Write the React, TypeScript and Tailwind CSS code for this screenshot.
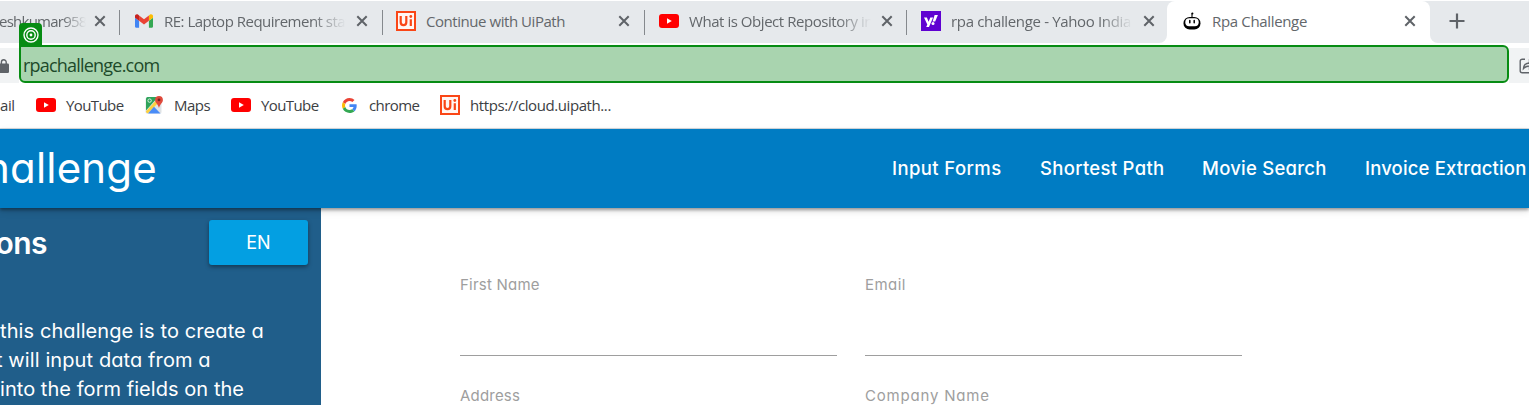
import type { ReactNode } from "react";

const ICON_GRAY = "#5f6368";

function CloseIcon() {
  return (
    <svg viewBox="0 0 12 12" className="size-3 shrink-0" fill="none" stroke={ICON_GRAY} strokeWidth="2">
      <path d="M1.300 1.300 10.700 10.700M10.700 1.300 1.300 10.700" />
    </svg>
  );
}

function GmailIcon() {
  return (
    <svg viewBox="52 42 88 66" className="h-[14px] w-[18px]">
      <path fill="#4285f4" d="M58 108h14V74L52 59v43c0 3.320 2.690 6 6 6" />
      <path fill="#34a853" d="M120 108h14c3.320 0 6-2.690 6-6V59l-20 15" />
      <path fill="#fbbc04" d="M120 48v26l20-15v-8c0-7.420-8.470-11.650-14.400-7.200" />
      <path fill="#ea4335" d="M72 74V48l24 18 24-18v26L96 92" />
      <path fill="#c5221f" d="M52 51v8l20 15V48l-5.600-4.200c-5.940-4.450-14.400-.22-14.400 7.200" />
    </svg>
  );
}

function UiPathIcon() {
  return (
    <svg viewBox="0 0 20 20" className="size-5">
      <rect x="1" y="1" width="18" height="18" fill="#fff6f3" stroke="#fa4616" strokeWidth="2" />
      <path d="M4.700 5v6.200q0 2.900 2.800 2.900t2.800-2.900V5M14.800 8.200v6.900" fill="none" stroke="#fa4616" strokeWidth="2.200" />
      <circle cx="14.800" cy="5.500" r="1.400" fill="#fa4616" />
    </svg>
  );
}

function YouTubeIcon() {
  return (
    <svg viewBox="0 0 20 14" className="h-[14px] w-5">
      <rect width="20" height="14" rx="3" fill="#ff0000" />
      <path d="M8 4.300v5.400l4.800-2.700z" fill="#fff" />
    </svg>
  );
}

function YahooIcon() {
  return (
    <svg viewBox="0 0 20 20" className="size-5">
      <rect width="20" height="20" fill="#5f01d1" />
      <path d="M3 6.500h2.900l1.700 4.200 1.700-4.200h2.800L8 16H5.200l1.100-2.600z" fill="#fff" />
      <path d="M13.600 4h3.300l-2.700 6.400h-2.600z" fill="#fff" />
      <circle cx="12" cy="12.500" r="1.500" fill="#fff" />
    </svg>
  );
}

function BotIcon() {
  return (
    <svg viewBox="0 0 18 18" className="size-[18px]">
      <path d="M9 5V1.200" stroke="#000" strokeWidth="1.100" />
      <circle cx="9.400" cy="1.500" r="1" />
      <rect x=".5" y="5" width="17" height="12.600" rx="6.200" />
      <rect x="2.300" y="6.200" width="13.400" height="8" rx="3.900" fill="#fff" />
      <path d="M6.800 8.500v2.300M11.200 8.500v2.300" stroke="#000" strokeWidth="1.500" strokeLinecap="round" />
    </svg>
  );
}

function MapsIcon() {
  return (
    <svg viewBox="0 0 18 18" className="size-[18px]">
      <path d="M2.500 1H15a1.500 1.500 0 0 1 1.500 1.500V16A1.500 1.500 0 0 1 15 17.500H2A1.500 1.500 0 0 1 .5 16V3a2 2 0 0 1 2-2z" fill="#dfe3e6" />
      <path d="M2.500 1H13L1 14.500V3a2 2 0 0 1 1.500-2z" fill="#2fa35a" />
      <path d="M.8 15.500 13.500 1.800l2.300 2.400L3 17.300H2z" fill="#fdd13f" />
      <path d="M3 17.500 9 10.800l6.500 6.700z" fill="#4a8cf7" />
      <circle cx="4.600" cy="4.600" r="1.700" fill="none" stroke="#d6f0de" strokeWidth="1" />
      <path d="M14 0a3.900 3.900 0 0 1 3.900 3.900c0 2.900-3 4-3.900 8.100-.9-4.100-3.900-5.200-3.900-8.100A3.900 3.900 0 0 1 14 0z" fill="#e04a3c" />
      <circle cx="14" cy="3.900" r="1.400" fill="#7c231e" />
    </svg>
  );
}

function GoogleIcon() {
  return (
    <svg viewBox="0 0 48 48" className="size-[15px]">
      <path fill="#EA4335" d="M24 9.500c3.540 0 6.710 1.220 9.210 3.600l6.850-6.850C35.900 2.380 30.470 0 24 0 14.620 0 6.510 5.380 2.560 13.220l7.980 6.190C12.430 13.720 17.740 9.500 24 9.500z" />
      <path fill="#4285F4" d="M46.980 24.550c0-1.570-.15-3.090-.38-4.550H24v9.020h12.940c-.58 2.960-2.260 5.480-4.780 7.180l7.730 6c4.510-4.180 7.090-10.360 7.090-17.650z" />
      <path fill="#FBBC05" d="M10.530 28.590c-.48-1.450-.76-2.990-.76-4.590s.27-3.140.76-4.590l-7.980-6.190C.92 16.460 0 20.120 0 24c0 3.880.92 7.540 2.560 10.780l7.970-6.190z" />
      <path fill="#34A853" d="M24 48c6.480 0 11.930-2.130 15.890-5.810l-7.730-6c-2.150 1.450-4.920 2.300-8.160 2.300-6.260 0-11.570-4.220-13.470-9.910l-7.980 6.190C6.510 42.620 14.620 48 24 48z" />
    </svg>
  );
}

function LockIcon() {
  return (
    <svg viewBox="0 0 12 14" className="h-[14px] w-3">
      <rect x="-2" y="4.500" width="11" height="9.500" rx="1.200" fill={ICON_GRAY} />
      <path d="M1.400 5V3.200a2.400 2.400 0 0 1 4.800 0V5" fill="none" stroke={ICON_GRAY} strokeWidth="1.400" />
    </svg>
  );
}

function ShareIcon() {
  return (
    <svg viewBox="0 0 16 16" className="size-4 shrink-0" fill="none" stroke={ICON_GRAY} strokeWidth="1.400">
      <path d="M6 1.200H3.200a2 2 0 0 0-2 2v9.600a2 2 0 0 0 2 2H13" />
      <path d="M4.500 10.500c.4-4 3-5.500 6-5.500V2.500L15 6.500l-4.500 4V8c-2.700 0-4.500.8-6 2.500z" />
    </svg>
  );
}

function TargetIcon() {
  return (
    <svg viewBox="0 0 16 16" className="size-4" fill="none" stroke="#fff" strokeWidth="1.400">
      <circle cx="8" cy="8" r="7" />
      <circle cx="8" cy="8" r="4.200" />
      <circle cx="8" cy="8" r="1.400" fill="#fff" stroke="none" />
    </svg>
  );
}

const FADE = "[mask-image:linear-gradient(to_right,#000_calc(100%-34px),transparent)]";

function Tab({ icon, title, tracking, fade, className }: { icon: ReactNode; title: string; tracking: string; fade?: boolean; className: string }) {
  return (
    <div className={`flex shrink-0 items-center pb-0.5 ${className}`}>
      <div className="flex w-5 justify-center">{icon}</div>
      <div className={`ml-[10px] w-[182px] overflow-hidden whitespace-nowrap ${tracking} ${fade ? FADE : ""}`}>{title}</div>
      <div className="ml-[10px] flex">
        <CloseIcon />
      </div>
    </div>
  );
}

function Separator() {
  return <div className="h-[25px] w-px shrink-0 bg-[#85898d]" />;
}

function Bookmark({ icon, label, className }: { icon: ReactNode; label: string; className: string }) {
  return (
    <div className={`flex shrink-0 items-center gap-[10px] ${className}`}>
      <div className="flex w-5 justify-center">{icon}</div>
      <span>{label}</span>
    </div>
  );
}

function Field({ label, tracking }: { label: string; tracking: string }) {
  return (
    <div className="h-[111px] w-[377px]">
      <div className="flex h-[83px] items-start border-b border-[#9e9e9e]">
        <label className={`text-[15px] leading-6 text-[#9e9e9e] ${tracking}`}>{label}</label>
      </div>
    </div>
  );
}

export default function App() {
  return (
    <div className="flex h-[405px] w-[1529px] flex-col overflow-hidden bg-white font-['Open_Sans','Noto_Sans',sans-serif] text-[15px]">
      <div className="mt-px flex h-[42px] shrink-0 items-center bg-[#e6e9ec] text-[#63676b]">
        <div className="flex w-[119px] shrink-0 items-center pb-0.5">
          <div className="w-[86px] overflow-hidden whitespace-nowrap tracking-[-0.750px] [mask-image:linear-gradient(to_right,#000_62px,transparent)]">
            <span className="-ml-px">eshkumar958</span>
          </div>
          <div className="ml-2 flex">
            <CloseIcon />
          </div>
        </div>
        <Separator />
        <Tab className="w-[262px] pl-[14px]" icon={<GmailIcon />} title="RE: Laptop Requirement status" tracking="tracking-[-0.500px]" fade />
        <Separator />
        <Tab className="w-[261px] pl-[13px]" icon={<UiPathIcon />} title="Continue with UiPath" tracking="tracking-[-0.450px]" />
        <Separator />
        <Tab className="w-[261px] pl-[14px]" icon={<YouTubeIcon />} title="What is Object Repository in UiPath" tracking="tracking-[-0.450px]" fade />
        <Separator />
        <Tab className="w-[252px] pl-[14px]" icon={<YahooIcon />} title="rpa challenge - Yahoo India" tracking="tracking-[-0.340px]" fade />
        <div className="flex h-full shrink-0 bg-[linear-gradient(#e6e9ec_50%,#fff_50%)]">
          <div className="h-full w-2 rounded-br-lg bg-[#e6e9ec]" />
          <div className="flex h-full items-center rounded-t-lg bg-white">
            <Tab className="w-[263px] pl-[15px]" icon={<BotIcon />} title="Rpa Challenge" tracking="tracking-[-0.340px]" />
          </div>
        </div>
        <div className="flex h-full flex-1 bg-white">
          <div className="flex h-full flex-1 items-center rounded-bl-lg bg-[#e6e9ec] pb-0.5 pl-[19px]">
            <svg viewBox="0 0 16 16" className="size-4" stroke={ICON_GRAY} strokeWidth="2.200">
              <path d="M8 .5v15M.5 8h15" />
            </svg>
          </div>
        </div>
      </div>

      <div className="flex h-[42px] shrink-0 items-start pt-0.5">
        <div className="mt-[3px] flex h-[35px] w-[19px] shrink-0 items-center bg-[#f1f3f4]">
          <LockIcon />
        </div>
        <div className="relative flex h-[38px] w-[1490px] shrink-0 items-center rounded-[6px] rounded-tl-none border-[2.500px] border-[#078c13] bg-[#a9d4af] pl-[2px] pt-[2px] text-[18px] tracking-[-0.790px] text-[#1d4a2a]">
          <div className="absolute -left-[2px] -top-[24px] flex h-[23px] w-[23px] items-center justify-center rounded-t-[4px] bg-[#078c13]">
            <TargetIcon />
          </div>
          rpachallenge.com
        </div>
        <div className="mt-[3px] flex h-[35px] flex-1 items-center overflow-hidden bg-[#f1f3f4] pl-[10px]">
          <ShareIcon />
        </div>
      </div>

      <div className="flex h-[44px] shrink-0 items-center border-b border-[#d5dbe0] pb-[3px] text-[#3c4043]">
        <span className="w-[36px] tracking-[-0.400px]">ail</span>
        <Bookmark className="w-[108px] tracking-[-0.600px]" icon={<YouTubeIcon />} label="YouTube" />
        <Bookmark className="w-[87px] tracking-[-0.500px]" icon={<MapsIcon />} label="Maps" />
        <Bookmark className="w-[108px] tracking-[-0.600px]" icon={<YouTubeIcon />} label="YouTube" />
        <Bookmark className="w-[101px] tracking-[-0.600px]" icon={<GoogleIcon />} label="chrome" />
        <Bookmark className="tracking-[-0.410px]" icon={<UiPathIcon />} label="https://cloud.uipath..." />
      </div>

      <div className="relative flex h-[79px] shrink-0 items-center justify-between bg-[#007cc3] font-['Inter',sans-serif] text-white shadow-[0_2px_3px_rgba(0,0,0,0.35),0_3px_8px_rgba(0,0,0,0.12)] [font-feature-settings:'cv11']">
        <div className="flex w-[157px] justify-end overflow-hidden whitespace-nowrap pb-0.5 text-[42px] leading-[60px] tracking-[0.200px]">hallenge</div>
        <nav className="flex h-full items-center whitespace-nowrap text-[18.500px] font-medium">
          <a className="w-[148px] tracking-[0.400px]">Input Forms</a>
          <a className="w-[162px] tracking-[0.300px]">Shortest Path</a>
          <a className="w-[163px] tracking-[0.250px]">Movie Search</a>
          <a className="w-[164px] tracking-[0.150px]">Invoice Extraction</a>
        </nav>
      </div>

      <div className="flex flex-1 font-['Inter',sans-serif] [font-feature-settings:'cv11']">
        <aside className="w-[321px] shrink-0 bg-[#205e8a] text-white">
          <div className="flex items-start justify-between pr-[13px] pt-3">
            <h2 className="flex w-[47px] justify-end overflow-hidden text-[30px] font-semibold leading-[46px] tracking-[-0.500px]">ons</h2>
            <button className="h-[45px] w-[99px] rounded-[3px] bg-[#039fe2] text-[18px] shadow-[0_2px_4px_rgba(0,0,0,0.4)]">EN</button>
          </div>
          <div className="mt-[51px] whitespace-nowrap text-[20px] leading-[29px]">
            <p className="tracking-[0.100px]">this challenge is to create a</p>
            <p className="-ml-[4px] tracking-[0.100px]">t will input data from a</p>
            <p className="tracking-[0.050px]">into the form fields on the</p>
          </div>
        </aside>
        <main className="grid flex-1 grid-cols-[377px_377px] content-start gap-x-7 pl-[139px] pt-[65px]">
          <Field label="First Name" tracking="tracking-[0.220px]" />
          <Field label="Email" tracking="tracking-[0.430px]" />
          <Field label="Address" tracking="tracking-[0.190px]" />
          <Field label="Company Name" tracking="tracking-[0.800px]" />
        </main>
      </div>
    </div>
  );
}
